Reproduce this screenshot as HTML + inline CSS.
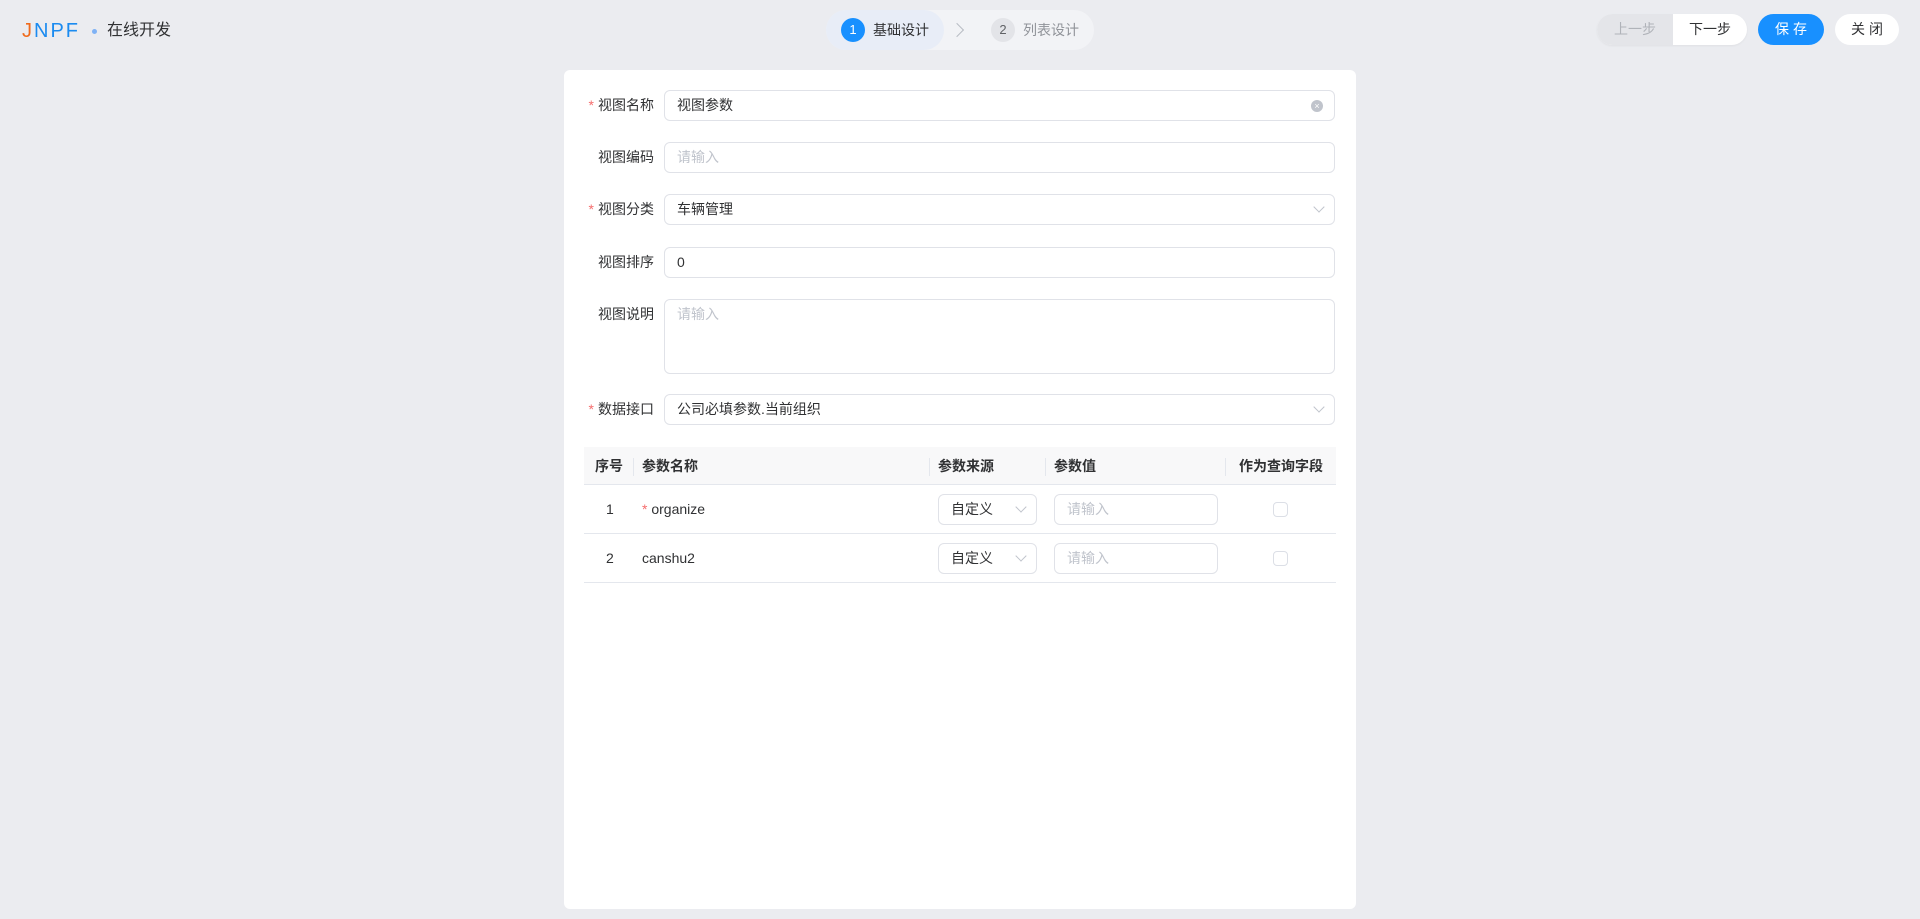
<!DOCTYPE html>
<html><head><meta charset="utf-8"><style>
*{box-sizing:border-box;margin:0;padding:0}
body{width:1920px;height:919px;background:#ebecf0;font-family:"Liberation Sans","Noto Sans CJK SC",sans-serif;font-size:14px;color:#303133;position:relative;overflow:hidden}
.abs{position:absolute}
.logo{left:22px;top:20px;font-size:20px;letter-spacing:2px;color:#1b8bf0;font-family:"Liberation Sans",sans-serif}
.steps{left:826px;top:10px;width:268px;height:40px;border-radius:20px;background:#f2f3f6}
.steps .act{position:absolute;left:0;top:0;width:118px;height:40px;border-radius:20px;background:#e8edf7}
.circ{position:absolute;width:24px;height:24px;border-radius:12px;top:8px;text-align:center;line-height:24px;font-size:13px}
.btn{position:absolute;top:14px;height:31px;border-radius:16px;text-align:center;line-height:31px;font-size:14px}
.card{left:564px;top:70px;width:792px;height:839px;background:#fff;border-radius:6px}
.lbl{position:absolute;right:702px;width:100px;text-align:right;line-height:31px;color:#303133}
.lbl i{color:#f56c6c;font-style:normal;margin-right:4px}
.inp{position:absolute;left:664px;width:671px;height:31px;border:1px solid #e0e2e8;border-radius:6px;padding-left:12px;line-height:29px;color:#303133}
.ph{color:#c0c4cc}
.arrow{position:absolute;right:11px;top:8px;width:8px;height:8px;border-right:1px solid #c0c4cc;border-bottom:1px solid #c0c4cc;transform:rotate(45deg)}
.th{position:absolute;top:447px;height:38px;line-height:38px;font-weight:bold;color:#303133}
.row{position:absolute;left:584px;width:752px;border-bottom:1px solid #e4e7ed}
.cell{position:absolute;line-height:20px}
.sel{position:absolute;left:938px;width:99px;height:31px;border:1px solid #e0e2e8;border-radius:6px;padding-left:12px;line-height:29px}
.sel .arrow{top:8px}
.tin{position:absolute;left:1054px;width:164px;height:31px;border:1px solid #e0e2e8;border-radius:6px;padding-left:12px;line-height:29px;color:#c0c4cc}
.cb{position:absolute;left:1273px;width:15px;height:15px;border:1px solid #dcdfe6;border-radius:4px}
.dv{position:absolute;top:458px;width:1px;height:18px;background:#e4e7ed}
</style></head><body>
<div class="abs logo"><span style="color:#f06a1b">J</span>NPF</div>
<div class="abs" style="left:92px;top:29px;width:5px;height:5px;border-radius:3px;background:#7fb2f5"></div>
<div class="abs" style="left:107px;top:20px;font-size:16px;line-height:22px">在线开发</div>

<div class="abs steps"><div class="act"></div>
<div class="circ" style="left:15px;background:#1890ff;color:#fff">1</div>
<div style="position:absolute;left:47px;top:10px;line-height:20px;font-size:14px;color:#303133">基础设计</div>
<div style="position:absolute;left:126px;top:15px;width:10px;height:10px;border-right:1px solid #b8bcc4;border-top:1px solid #b8bcc4;transform:rotate(45deg)"></div>
<div class="circ" style="left:165px;background:#e3e4e8;color:#606266">2</div>
<div style="position:absolute;left:197px;top:10px;line-height:20px;color:#909399">列表设计</div>
</div>

<div class="btn" style="left:1597px;width:150px;background:#fff;box-shadow:0 1px 2px rgba(0,0,0,.05)">
<div style="position:absolute;left:0;top:0;width:76px;height:31px;background:#e4e5e9;border-radius:16px 0 0 16px;color:#b0b3b9">上一步</div>
<div style="position:absolute;left:76px;top:0;width:74px;color:#303133">下一步</div></div>
<div class="btn" style="left:1758px;width:66px;background:#1890ff;color:#fff;letter-spacing:4px;text-indent:4px">保存</div>
<div class="btn" style="left:1835px;width:64px;background:#fff;letter-spacing:4px;text-indent:4px">关闭</div>

<div class="abs card"></div>

<div class="lbl" style="top:90px;left:554px"><i>*</i>视图名称</div>
<div class="inp" style="top:90px">视图参数<div style="position:absolute;right:11px;top:9px;width:12px;height:12px;border-radius:6px;background:#c0c4cc;color:#fff;font-size:9px;line-height:12px;text-align:center">×</div></div>
<div class="lbl" style="top:142px;left:554px">视图编码</div>
<div class="inp ph" style="top:142px">请输入</div>
<div class="lbl" style="top:194px;left:554px"><i>*</i>视图分类</div>
<div class="inp" style="top:194px">车辆管理<div class="arrow"></div></div>
<div class="lbl" style="top:247px;left:554px">视图排序</div>
<div class="inp" style="top:247px">0</div>
<div class="lbl" style="top:299px;left:554px">视图说明</div>
<div class="inp ph" style="top:299px;height:75px">请输入</div>
<div class="lbl" style="top:394px;left:554px"><i>*</i>数据接口</div>
<div class="inp" style="top:394px">公司必填参数.当前组织<div class="arrow"></div></div>

<div class="row" style="top:447px;height:38px;background:#f8f8f9"></div>
<div class="th" style="left:595px">序号</div>
<div class="dv" style="left:633px"></div>
<div class="th" style="left:642px">参数名称</div>
<div class="dv" style="left:929px"></div>
<div class="th" style="left:938px">参数来源</div>
<div class="dv" style="left:1045px"></div>
<div class="th" style="left:1054px">参数值</div>
<div class="dv" style="left:1225px"></div>
<div class="th" style="left:1239px">作为查询字段</div>

<div class="row" style="top:485px;height:49px"></div>
<div class="cell" style="left:606px;top:499px">1</div>
<div class="cell" style="left:642px;top:499px"><span style="color:#f56c6c">* </span>organize</div>
<div class="sel" style="top:494px">自定义<div class="arrow"></div></div>
<div class="tin" style="top:494px">请输入</div>
<div class="cb" style="top:502px"></div>

<div class="row" style="top:534px;height:49px"></div>
<div class="cell" style="left:606px;top:548px">2</div>
<div class="cell" style="left:642px;top:548px">canshu2</div>
<div class="sel" style="top:543px">自定义<div class="arrow"></div></div>
<div class="tin" style="top:543px">请输入</div>
<div class="cb" style="top:551px"></div>
</body></html>
